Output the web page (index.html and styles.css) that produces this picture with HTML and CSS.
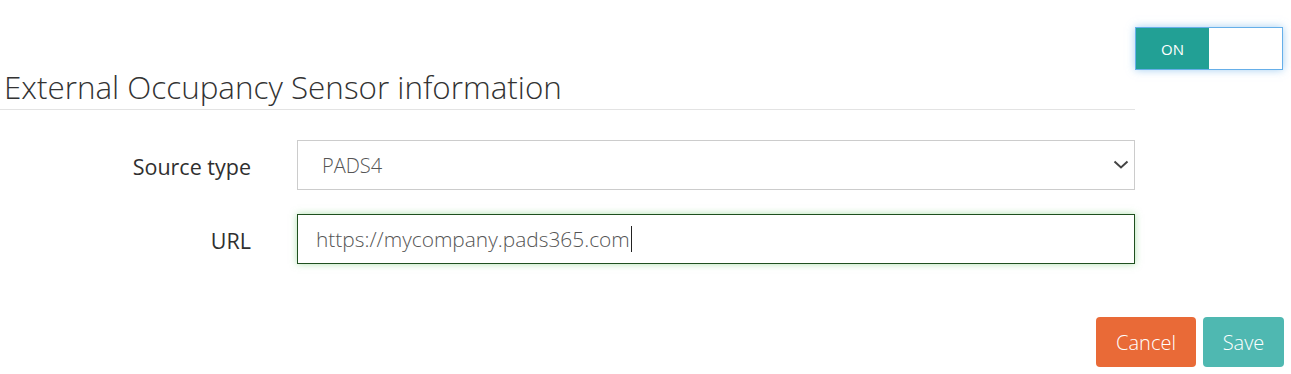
FILE: index.html
```html
<!DOCTYPE html>
<html lang="en">
<head>
    <meta charset="UTF-8">
    <meta name="viewport" content="width=device-width, initial-scale=1.0">
    <title>External Occupancy Sensor</title>
    <link rel="stylesheet" href="styles.css">
</head>
<body>
    <div class="panel">
        <div class="panel-header">
            <h1>External Occupancy Sensor information</h1>
            <div class="toggle">
                <span class="toggle-on">ON</span>
                <span class="toggle-off"></span>
            </div>
        </div>

        <form class="sensor-form">
            <label class="form-label" for="source-type">Source type</label>
            <div class="select-wrap">
                <select id="source-type" class="form-control">
                    <option>PADS4</option>
                </select>
                <svg class="select-arrow" width="16" height="10" viewBox="0 0 16 10">
                    <path d="M1.5 1.5 L8 7.5 L14.5 1.5" fill="none" stroke="#444" stroke-width="2"/>
                </svg>
            </div>

            <label class="form-label" for="url">URL</label>
            <div class="input-focus">
                <span class="url-text">https://mycompany.pads365.com</span><span class="caret"></span>
            </div>
        </form>

        <div class="actions">
            <button class="btn btn-cancel">Cancel</button>
            <button class="btn btn-save">Save</button>
        </div>
    </div>
</body>
</html>
```

FILE: styles.css
```css
body {
    font-family: 'Open Sans', 'Liberation Sans', sans-serif;
    background-color: #fff;
    color: #333;
    margin: 0;
    padding: 0;
}

.panel {
    width: 1284px;
}

.panel-header {
    display: flex;
    height: 110px;
}

.panel-header h1 {
    width: 1131px;
    align-self: flex-end;
    margin: 0;
    padding: 0 0 3px 4px;
    font-size: 31.4px;
    font-weight: 300;
    line-height: 38px;
    color: #333;
    border-bottom: 1px solid #e3e3e3;
}

.toggle {
    display: flex;
    align-self: flex-start;
    margin-top: 27px;
    width: 146px;
    height: 41px;
    border: 1px solid #66afe9;
    box-shadow: 0 0 8px rgba(102, 175, 233, 0.6);
    background-color: #fff;
}

.toggle-on {
    width: 73px;
    background-color: #22a095;
    color: #fff;
    font-size: 15px;
    display: flex;
    align-items: center;
    justify-content: center;
}

.toggle-off {
    flex: 1;
}

.sensor-form {
    display: grid;
    grid-template-columns: 297px 838px;
    row-gap: 24px;
    margin-top: 30px;
}

.form-label {
    align-self: center;
    text-align: right;
    padding: 3px 46px 0 0;
    font-size: 21.5px;
    color: #2f2f2f;
}

.select-wrap {
    position: relative;
}

.form-control {
    appearance: none;
    -webkit-appearance: none;
    width: 100%;
    height: 50px;
    box-sizing: border-box;
    border: 1px solid #ccc;
    border-radius: 0;
    background-color: #fff;
    padding: 1px 24px 0;
    font-family: inherit;
    font-size: 20px;
    font-weight: 300;
    color: #555;
}

.select-arrow {
    position: absolute;
    right: 6px;
    top: 20px;
}

.input-focus {
    height: 50px;
    box-sizing: border-box;
    border: 1px solid #1f4f1f;
    box-shadow: 0 0 7px rgba(110, 200, 110, 0.55);
    display: flex;
    align-items: center;
    padding-left: 18px;
    font-size: 20.9px;
    font-weight: 300;
    color: #555;
}

.caret {
    display: inline-block;
    width: 1px;
    height: 26px;
    background-color: #222;
    margin-left: 1px;
}

.actions {
    display: flex;
    justify-content: flex-end;
    gap: 7px;
    margin-top: 53px;
}

.btn {
    height: 50px;
    border: none;
    border-radius: 4px;
    color: #fff;
    font-family: inherit;
    font-size: 20px;
    font-weight: 300;
    cursor: pointer;
}

.btn-cancel {
    width: 100px;
    background-color: #e96a37;
}

.btn-save {
    width: 81px;
    background-color: #4fb8b1;
}
```
